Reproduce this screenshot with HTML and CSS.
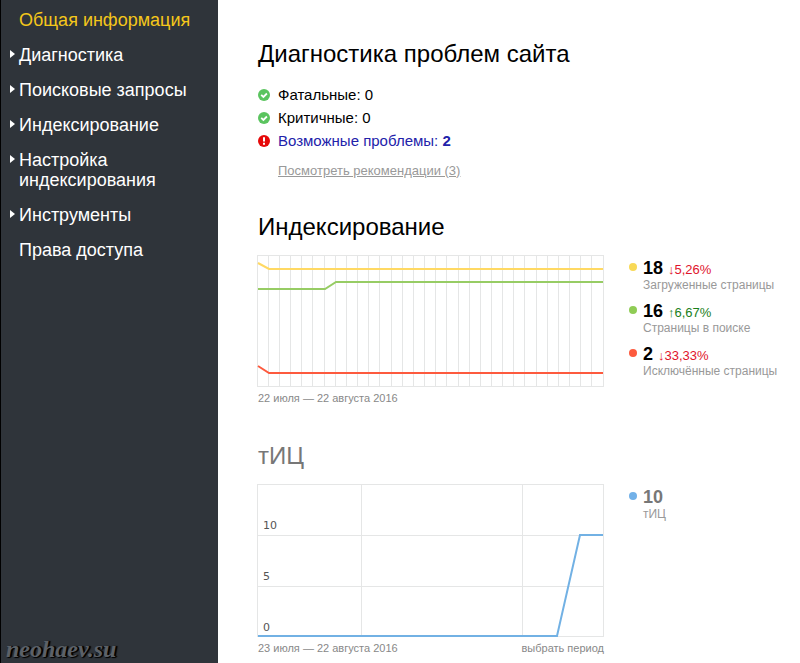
FILE: index.html
```html
<!DOCTYPE html>
<html lang="ru">
<head>
    <meta charset="UTF-8">
    <meta name="viewport" content="width=device-width, initial-scale=1.0">
    <title>Общая информация</title>
    <link rel="stylesheet" href="styles.css">
</head>
<body>
    <aside class="sidebar">
        <nav>
            <ul class="menu">
                <li class="menu-item"><a href="#" class="active">Общая информация</a></li>
                <li class="menu-item has-children"><a href="#">Диагностика</a></li>
                <li class="menu-item has-children"><a href="#">Поисковые запросы</a></li>
                <li class="menu-item has-children"><a href="#">Индексирование</a></li>
                <li class="menu-item has-children"><a href="#">Настройка индексирования</a></li>
                <li class="menu-item has-children"><a href="#">Инструменты</a></li>
                <li class="menu-item"><a href="#">Права доступа</a></li>
            </ul>
        </nav>
        <div class="watermark">neohaev.su</div>
    </aside>

    <main class="content">
        <section class="diagnostics">
            <h1>Диагностика проблем сайта</h1>
            <ul class="problems">
                <li>
                    <svg class="status" viewBox="0 0 12 12">
                        <circle cx="6" cy="6" r="6" fill="#5bc45f"/>
                        <path d="M3.2 5.8l2.2 2.2 3.5-3.5" fill="none" stroke="#fff" stroke-width="1.8"/>
                    </svg>
                    Фатальные: 0
                </li>
                <li>
                    <svg class="status" viewBox="0 0 12 12">
                        <circle cx="6" cy="6" r="6" fill="#5bc45f"/>
                        <path d="M3.2 5.8l2.2 2.2 3.5-3.5" fill="none" stroke="#fff" stroke-width="1.8"/>
                    </svg>
                    Критичные: 0
                </li>
                <li>
                    <svg class="status" viewBox="0 0 12 12">
                        <circle cx="6" cy="6" r="6" fill="#e60a0a"/>
                        <path d="M6 2.2v4.4M6 7.8v1.9" fill="none" stroke="#fff" stroke-width="2"/>
                    </svg>
                    <a href="#" class="warning">Возможные проблемы: <b>2</b></a>
                </li>
            </ul>
            <a href="#" class="recommendations">Посмотреть рекомендации (3)</a>
        </section>

        <section class="indexing">
            <h2>Индексирование</h2>
            <div class="row">
                <div class="chart-col">
                    <svg class="chart chart-index" viewBox="0 0 347 132" preserveAspectRatio="none">
                        <path class="grid" d="M0 .5h347M0 131.5h347M.5 0v132M11.5 0v132M22.5 0v132M33.5 0v132M44.5 0v132M55.5 0v132M67.5 0v132M78.5 0v132M89.5 0v132M100.5 0v132M111.5 0v132M122.5 0v132M134.5 0v132M145.5 0v132M156.5 0v132M167.5 0v132M178.5 0v132M189.5 0v132M201.5 0v132M212.5 0v132M223.5 0v132M234.5 0v132M245.5 0v132M256.5 0v132M267.5 0v132M279.5 0v132M290.5 0v132M301.5 0v132M312.5 0v132M323.5 0v132M334.5 0v132M346.5 0v132"/>
                        <path class="line" stroke="#ffd963" d="M1 8l11 6h334"/>
                        <path class="line" stroke="#97cc64" d="M1 34h67l11-7h267"/>
                        <path class="line" stroke="#fd5a3e" d="M1 111l11 7h334"/>
                    </svg>
                    <div class="chart-footer">
                        <span>22 июля — 22 августа 2016</span>
                    </div>
                </div>
                <ul class="legend">
                    <li class="yellow">
                        <div class="value">18 <span class="down">↓5,26%</span></div>
                        <div class="name">Загруженные страницы</div>
                    </li>
                    <li class="green">
                        <div class="value">16 <span class="up">↑6,67%</span></div>
                        <div class="name">Страницы в поиске</div>
                    </li>
                    <li class="red">
                        <div class="value">2 <span class="down">↓33,33%</span></div>
                        <div class="name">Исключённые страницы</div>
                    </li>
                </ul>
            </div>
        </section>

        <section class="tic">
            <h2>тИЦ</h2>
            <div class="row">
                <div class="chart-col">
                    <div class="chart-box">
                        <svg class="chart chart-tic" viewBox="0 0 347 153" preserveAspectRatio="none">
                            <path class="grid" d="M0 .5h347M0 51.5h347M0 102.5h347M0 152.5h347M.5 0v153M104.5 0v153M265.5 0v153M346.5 0v153"/>
                            <path class="line" stroke="#72b1e4" d="M1 152h299l23-101h23"/>
                        </svg>
                        <div class="scale">
                            <span>10</span>
                            <span>5</span>
                            <span>0</span>
                        </div>
                    </div>
                    <div class="chart-footer">
                        <span>23 июля — 22 августа 2016</span>
                        <a href="#">выбрать период</a>
                    </div>
                </div>
                <ul class="legend">
                    <li class="blue">
                        <div class="value">10</div>
                        <div class="name">тИЦ</div>
                    </li>
                </ul>
            </div>
        </section>
    </main>
</body>
</html>
```
FILE: styles.css
```css
* {
    margin: 0;
    padding: 0;
    box-sizing: border-box;
}

body {
    display: flex;
    min-height: 100vh;
    font-family: "Liberation Sans", Arial, sans-serif;
    color: #000;
    background: #fff;
}

ul {
    list-style: none;
}

a {
    color: inherit;
    text-decoration: none;
}

/* Sidebar */
.sidebar {
    display: flex;
    flex-direction: column;
    justify-content: space-between;
    flex: 0 0 218px;
    padding: 10px 24px 0 8px;
    border-left: 1px solid #000;
    background: #2f343a;
    color: #fff;
}

.menu {
    display: flex;
    flex-direction: column;
    gap: 15px;
}

.menu-item {
    display: flex;
    font-size: 18px;
    line-height: 20px;
}

.menu-item::before {
    content: "";
    flex: none;
    width: 5px;
    height: 8px;
    margin: 5px 4px 0 1px;
}

.has-children::before {
    background: #fff;
    clip-path: polygon(0 0, 100% 50%, 0 100%);
}

.active {
    color: #f5c71a;
}

.watermark {
    margin-left: -3px;
    font-family: "Liberation Serif", serif;
    font-size: 24px;
    font-style: italic;
    font-weight: bold;
    line-height: 28px;
    color: #5c6168;
    text-shadow: 1px 1px 1px #000, 2px 0 1px #000;
}

/* Content */
.content {
    flex: 1;
    min-width: 0;
    padding: 40px 0 8px 39px;
}

h1,
h2 {
    padding-left: 1px;
    font-size: 24px;
    font-weight: normal;
    line-height: 28px;
}

.problems {
    margin-top: 15px;
    padding-left: 1px;
}

.problems li {
    display: flex;
    align-items: center;
    gap: 8px;
    font-size: 15px;
    line-height: 23px;
}

.status {
    width: 12px;
    height: 12px;
}

.warning {
    color: #2222aa;
}

.recommendations {
    display: inline-block;
    margin: 11px 0 0 21px;
    font-size: 13px;
    line-height: 16px;
    color: #999;
    text-decoration: underline;
}

.indexing {
    margin-top: 34px;
}

.tic {
    margin-top: 37px;
}

.tic h2,
.tic .value {
    color: #777;
}

.row {
    display: flex;
    gap: 25px;
    margin-top: 14px;
}

.chart-col {
    flex: 1;
    min-width: 0;
}

.chart {
    display: block;
    width: 100%;
}

.chart-index {
    height: 132px;
}

.chart-tic {
    height: 153px;
}

.grid {
    fill: none;
    stroke: #e5e6e6;
    stroke-width: 1;
    vector-effect: non-scaling-stroke;
}

.line {
    fill: none;
    stroke-width: 2;
    vector-effect: non-scaling-stroke;
}

/* Axis labels lie over the plot */
.chart-box {
    position: relative;
}

.scale {
    position: absolute;
    inset: 0;
    display: grid;
    grid-template-rows: repeat(3, 1fr);
    align-items: end;
    padding-left: 6px;
    font-family: "DejaVu Sans", sans-serif;
    font-size: 11px;
    line-height: 18px;
    color: #555;
}

.chart-footer {
    display: flex;
    justify-content: space-between;
    padding: 4px 0 0 1px;
    font-size: 11px;
    line-height: 14px;
    color: #888;
}

/* Legend */
.legend {
    flex: 0 0 171px;
    display: flex;
    flex-direction: column;
    gap: 9px;
    padding-top: 4px;
}

.legend li {
    display: grid;
    grid-template-columns: 8px 1fr;
    column-gap: 6px;
}

.legend li::before {
    content: "";
    width: 8px;
    height: 8px;
    margin-top: 4px;
    border-radius: 50%;
    background: currentColor;
}

.value {
    font-size: 18px;
    font-weight: bold;
    line-height: 18px;
    color: #000;
}

.value span {
    font-size: 13px;
    font-weight: normal;
    line-height: 13px;
}

.name {
    grid-column: 2;
    font-size: 12px;
    line-height: 16px;
    white-space: nowrap;
    color: #999;
}

.yellow {
    color: #f8d957;
}

.green {
    color: #8fcc55;
}

.red {
    color: #fd5a3e;
}

.blue {
    color: #72b1e8;
}

.down {
    color: #e0142c;
}

.up {
    color: #1a801a;
}
```
